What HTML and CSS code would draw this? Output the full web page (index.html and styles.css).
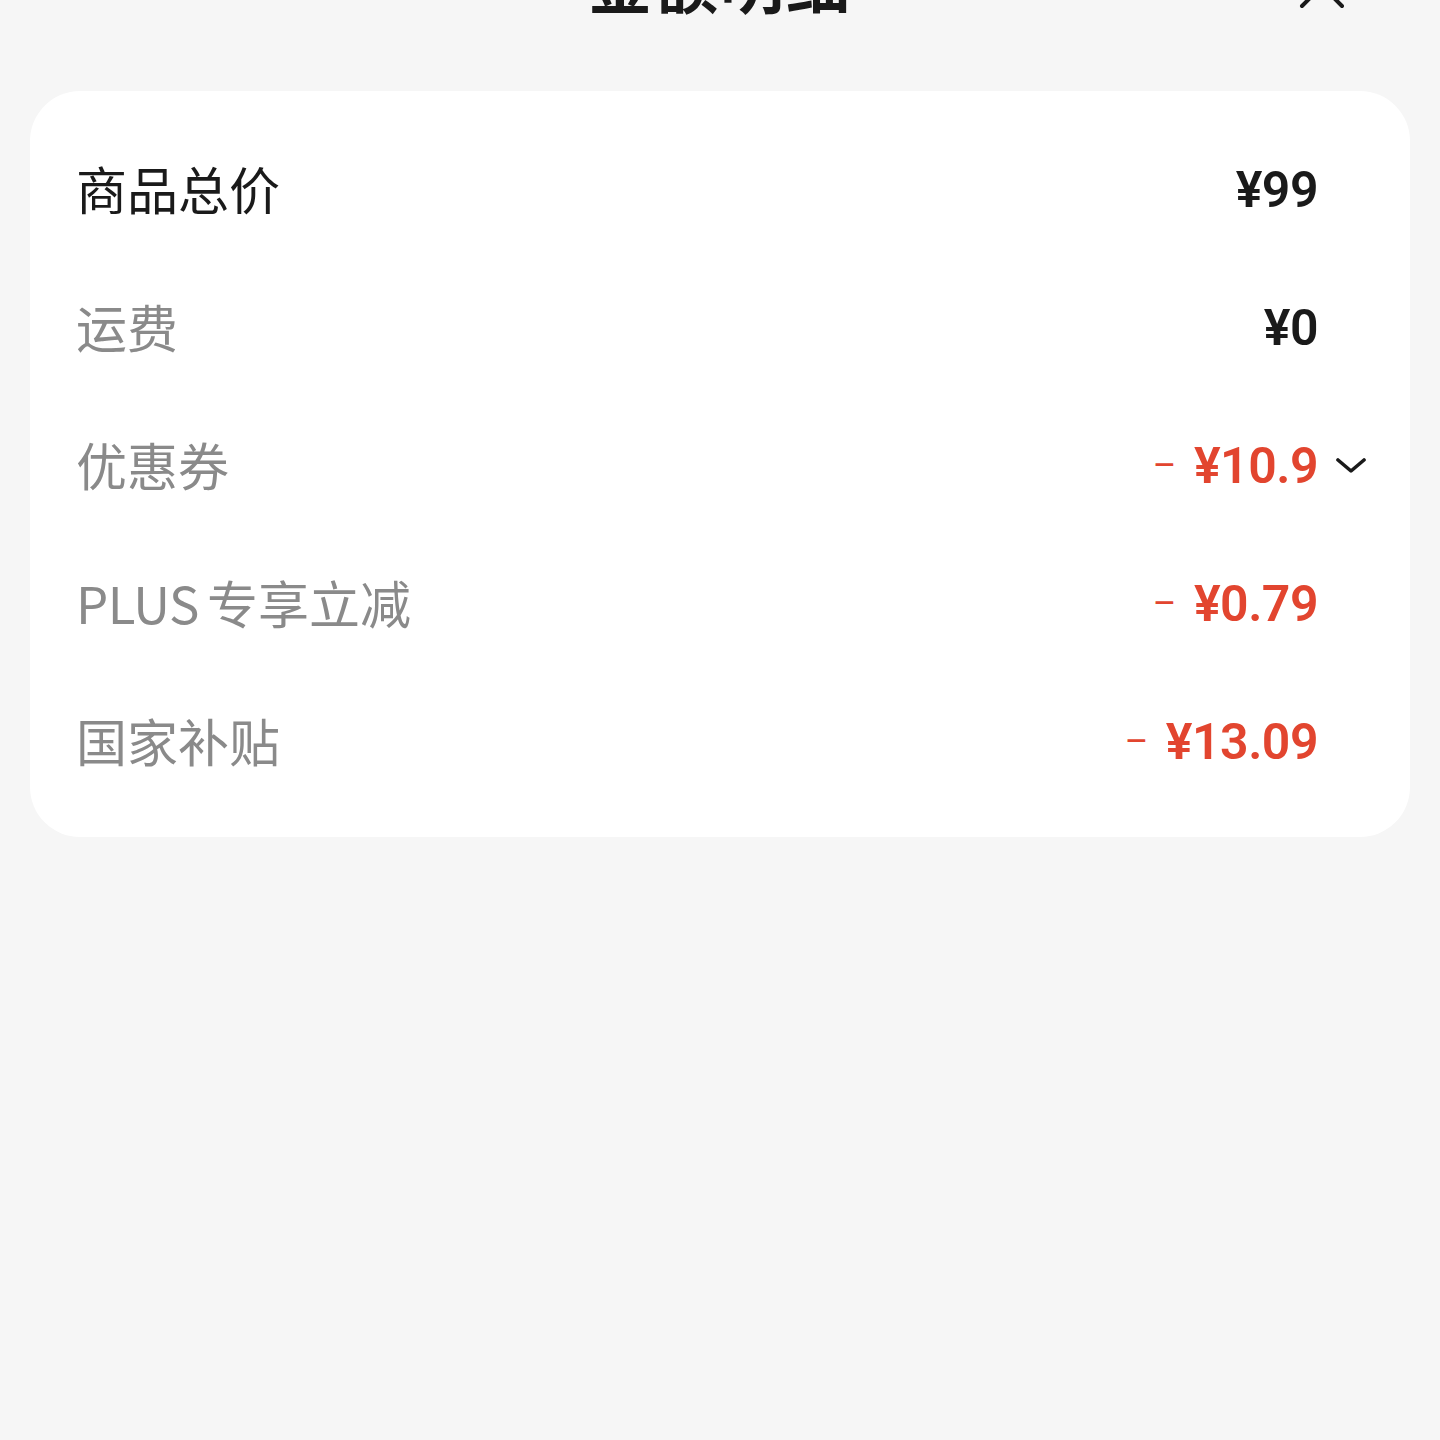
FILE: index.html
```html
<!DOCTYPE html>
<html lang="zh-CN">
<head>
<meta charset="utf-8">
<title>金额明细</title>
<link rel="stylesheet" href="styles.css">
</head>
<body>
<div class="sheet">
  <header class="header">
    <h1 class="title">金额明细</h1>
    <button class="close" aria-label="关闭">
      <svg viewBox="0 0 48 48" width="48" height="48"><path d="M4 4 L44 44 M44 4 L4 44" stroke="#1a1a1a" stroke-width="4" stroke-linecap="round" fill="none"/></svg>
    </button>
  </header>
  <section class="card">
    <div class="row">
      <span class="label strong">商品总价</span>
      <span class="value">¥99</span>
      <span class="slot"></span>
    </div>
    <div class="row">
      <span class="label">运费</span>
      <span class="value">¥0</span>
      <span class="slot"></span>
    </div>
    <div class="row">
      <span class="label">优惠券</span>
      <span class="value red"><span class="minus">–</span>¥10.9</span>
      <span class="slot">
        <svg class="chev" viewBox="0 0 30 16" width="30" height="16"><path d="M2 2 L15 13 L28 2" stroke="#1a1a1a" stroke-width="3.6" stroke-linecap="round" stroke-linejoin="round" fill="none"/></svg>
      </span>
    </div>
    <div class="row">
      <span class="label"><span class="latin">PLUS</span>专享立减</span>
      <span class="value red"><span class="minus">–</span>¥0.79</span>
      <span class="slot"></span>
    </div>
    <div class="row">
      <span class="label">国家补贴</span>
      <span class="value red"><span class="minus">–</span>¥13.09</span>
      <span class="slot"></span>
    </div>
  </section>
</div>
</body>
</html>
```

FILE: styles.css
```css
html, body {
  margin: 0;
  padding: 0;
  background: #f6f6f6;
}
body {
  font-family: "Noto Sans CJK SC", "Noto Sans", sans-serif;
  width: 1440px;
  height: 1440px;
  overflow: hidden;
}
.sheet {
  display: flex;
  flex-direction: column;
}
.header {
  height: 91px;
  position: relative;
  display: flex;
  justify-content: center;
  overflow: hidden;
}
.title {
  margin: -52px 0 0 0;
  font-size: 64px;
  line-height: 64px;
  font-weight: 700;
  color: #1a1a1a;
  letter-spacing: 2px;
  height: 64px;
}
.close {
  position: absolute;
  left: 1298px;
  top: -38px;
  width: 48px;
  height: 48px;
  padding: 0;
  border: 0;
  background: none;
}
.close svg {
  display: block;
}
.card {
  margin: 0 30px;
  background: #ffffff;
  border-radius: 50px;
  padding: 30px 44px 26px 46px;
  display: flex;
  flex-direction: column;
}
.row {
  height: 138px;
  display: grid;
  grid-template-columns: 1fr auto 48px;
  align-items: center;
}
.label {
  font-size: 51px;
  color: #8a8a8a;
  line-height: 1;
  margin-top: -4px;
}
.label.strong {
  color: #1a1a1a;
}
.latin {
  margin-right: 8px;
  letter-spacing: -0.5px;
}
.value {
  font-family: Roboto, "Liberation Sans", sans-serif;
  font-weight: 600;
  font-size: 50px;
  color: #1a1a1a;
  line-height: 1;
  display: flex;
  align-items: center;
  letter-spacing: -0.5px;
}
.value.red {
  color: #e2452f;
}
.minus {
  font-weight: 400;
  margin-right: 18px;
  font-size: 36px;
}
.slot {
  display: flex;
  justify-content: flex-end;
  align-items: center;
}
.chev {
  display: block;
}
```
